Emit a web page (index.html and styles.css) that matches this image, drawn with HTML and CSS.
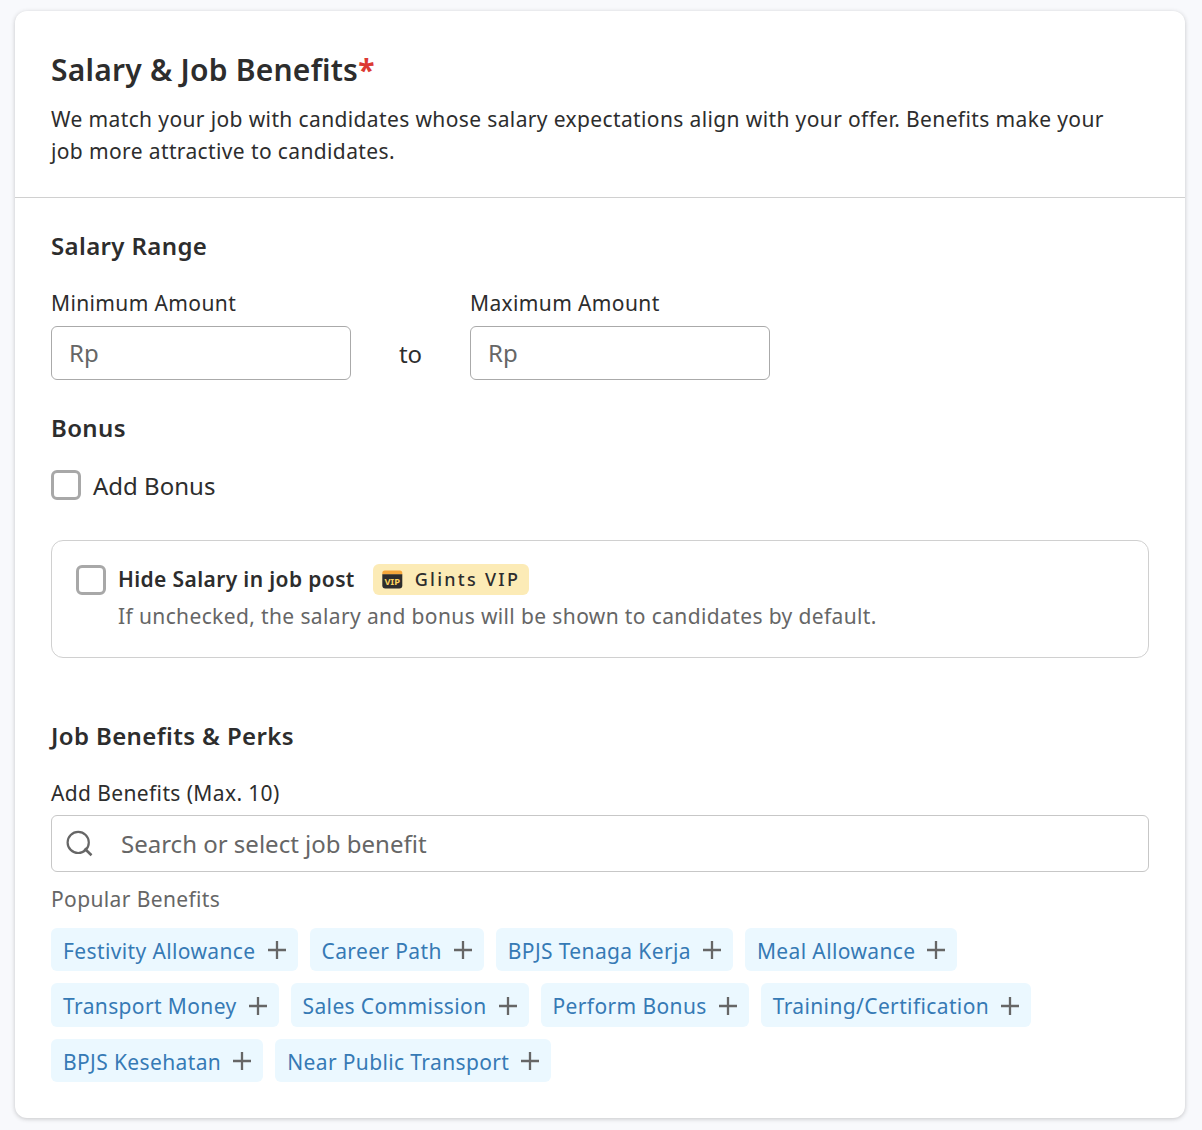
FILE: index.html
```html
<!DOCTYPE html>
<html lang="en">
<head>
<meta charset="utf-8">
<title>Salary &amp; Job Benefits</title>
<link rel="stylesheet" href="styles.css">
</head>
<body>
<svg width="0" height="0" class="sprite" aria-hidden="true">
  <symbol id="plus" viewBox="0 0 18 18"><path d="M9 0v18M0 9h18" stroke="#666" stroke-width="2.300" fill="none"/></symbol>
</svg>
<main class="card">
  <header class="card-header">
    <h1 class="title">Salary &amp; Job Benefits<span class="required">*</span></h1>
    <p class="intro">We match your job with candidates whose salary expectations align with your offer. Benefits make your job more attractive to candidates.</p>
  </header>
  <div class="card-body">
    <section>
      <h2 class="heading">Salary Range</h2>
      <div class="range">
        <div class="field">
          <div class="label">Minimum Amount</div>
          <div class="amount">Rp</div>
        </div>
        <div class="to">to</div>
        <div class="field">
          <div class="label">Maximum Amount</div>
          <div class="amount">Rp</div>
        </div>
      </div>
    </section>
    <section class="bonus">
      <h2 class="heading">Bonus</h2>
      <div class="check-row"><span class="checkbox"></span><span class="check-text">Add Bonus</span></div>
    </section>
    <section class="hide-box">
      <span class="checkbox"></span>
      <div>
        <div class="hide-title">
          <span>Hide Salary in job post</span>
          <span class="vip">
            <svg class="vip-icon" width="21" height="19" viewBox="0 0 21 19">
              <path d="M0.300 4.500V3A2.500 2.500 0 0 1 2.800 0.500h15A2.500 2.500 0 0 1 20.300 3V4.500z" fill="#f5a73b"/>
              <path d="M0.300 4.300h20v11.200a3 3 0 0 1-3 3h-14a3 3 0 0 1-3-3z" fill="#2d2d2d"/>
              <text x="10.300" y="15" text-anchor="middle" textLength="15.500" lengthAdjust="spacingAndGlyphs" class="vip-letters">VIP</text>
            </svg>
            <span class="vip-text">Glints VIP</span>
          </span>
        </div>
        <div class="hide-note">If unchecked, the salary and bonus will be shown to candidates by default.</div>
      </div>
    </section>
    <section class="perks">
      <h2 class="heading">Job Benefits &amp; Perks</h2>
      <div class="label perks-label">Add Benefits (Max. 10)</div>
      <div class="search">
        <svg width="28" height="28" viewBox="0 0 28 28" fill="none" stroke="#666" stroke-width="2.200"><circle cx="12.200" cy="12.400" r="10.600"/><path d="M18.500 18.500l7 6.800" stroke-width="2.600"/></svg>
        <span>Search or select job benefit</span>
      </div>
      <div class="popular">Popular Benefits</div>
      <div class="chips">
        <span class="chip">Festivity Allowance<svg class="plus"><use href="#plus"/></svg></span>
        <span class="chip">Career Path<svg class="plus"><use href="#plus"/></svg></span>
        <span class="chip">BPJS Tenaga Kerja<svg class="plus"><use href="#plus"/></svg></span>
        <span class="chip">Meal Allowance<svg class="plus"><use href="#plus"/></svg></span>
        <span class="chip">Transport Money<svg class="plus"><use href="#plus"/></svg></span>
        <span class="chip">Sales Commission<svg class="plus"><use href="#plus"/></svg></span>
        <span class="chip">Perform Bonus<svg class="plus"><use href="#plus"/></svg></span>
        <span class="chip">Training/Certification<svg class="plus"><use href="#plus"/></svg></span>
        <span class="chip">BPJS Kesehatan<svg class="plus"><use href="#plus"/></svg></span>
        <span class="chip">Near Public Transport<svg class="plus"><use href="#plus"/></svg></span>
      </div>
    </section>
  </div>
</main>
</body>
</html>
```
FILE: styles.css
```css
* { box-sizing: border-box; }
body {
  margin: 0;
  padding: 11px 17px 12px 15px;
  background: #f8f9fc;
  color: #2d2d2d;
  font-family: "Noto Sans", sans-serif;
  font-size: 21px;
  line-height: 32px;
  letter-spacing: 0.375px;
}
h1, h2, p { margin: 0; }
.sprite { display: none; }
.card {
  height: 1107px;
  background: #fff;
  border-radius: 12px;
  box-shadow: 0 1px 4px rgba(45, 45, 45, 0.25);
}
.card-header {
  height: 187px;
  padding: 39px 36px 0;
  border-bottom: 1px solid #d0d0d0;
}
.title {
  font-size: 30px;
  line-height: 40px;
  font-weight: 600;
  letter-spacing: 0.225px;
}
.required { color: #dc3a33; font-weight: 700; }
.intro { max-width: 1070px; margin-top: 13px; }
.card-body { padding: 30px 36px 36px; }
.heading {
  font-size: 24px;
  line-height: 36px;
  font-weight: 600;
  letter-spacing: 0.375px;
}
.range { display: flex; align-items: flex-end; margin-top: 23px; }
.field { width: 300px; }
.amount {
  display: flex;
  align-items: center;
  height: 54px;
  margin-top: 7px;
  padding-left: 17px;
  border: 1px solid #aaa;
  border-radius: 6px;
  color: #666;
  font-size: 24px;
  letter-spacing: 0;
}
.to {
  width: 119px;
  padding-bottom: 10px;
  text-align: center;
  font-size: 24px;
  letter-spacing: 0;
}
.bonus { margin-top: 30px; }
.check-row { display: flex; align-items: center; gap: 12px; height: 32px; margin-top: 23px; }
.check-text { font-size: 24px; letter-spacing: 0; padding-top: 2px; }
.checkbox {
  flex: none;
  width: 30px;
  height: 30px;
  border: 3px solid #a8a8a8;
  border-radius: 6px;
  background: #fff;
}
.hide-box {
  display: flex;
  gap: 12px;
  height: 118px;
  margin-top: 39px;
  padding: 24px;
  border: 1px solid #d0d0d0;
  border-radius: 12px;
}
.hide-title { display: flex; align-items: center; gap: 18px; height: 28px; font-weight: 600; }
.hide-note { margin-top: 7px; color: #666; }
.vip {
  display: flex;
  align-items: center;
  gap: 12px;
  width: 156px;
  height: 31px;
  padding-left: 9px;
  border-radius: 6px;
  background: #fcebb6;
  font-size: 18px;
  font-weight: 500;
  letter-spacing: 2.25px;
}
.vip-text { white-space: nowrap; }
.vip-letters { font-size: 9.5px; font-weight: 700; letter-spacing: 0; fill: #fbd35f; }
.perks { margin-top: 60px; }
.perks-label { margin-top: 23px; }
.search {
  display: flex;
  align-items: center;
  gap: 27px;
  height: 57px;
  margin-top: 6px;
  padding-left: 14px;
  border: 1px solid #c7c7c7;
  border-radius: 6px;
  color: #666;
  font-size: 24px;
  letter-spacing: 0;
}
.popular { margin-top: 11px; color: #666; }
.chips { display: flex; flex-wrap: wrap; gap: 12px; margin-top: 13px; }
.chip {
  display: flex;
  align-items: center;
  gap: 12px;
  height: 43.4px;
  padding: 2.6px 12px 0;
  border-radius: 6px;
  background: #ebf8ff;
  color: #367ab5;
  white-space: nowrap;
}
.plus { width: 18px; height: 18px; margin-top: -1px; }
```
